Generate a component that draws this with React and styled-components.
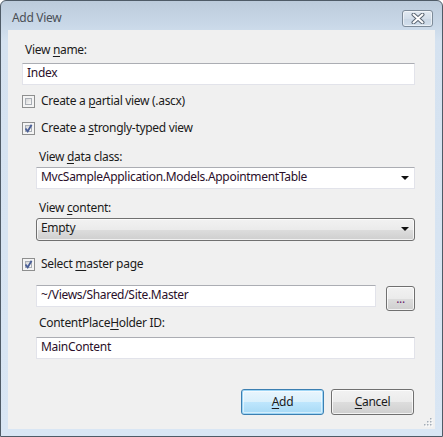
import React from "react";
import styled, { createGlobalStyle } from "styled-components";

const GlobalStyle = createGlobalStyle`
  body {
    margin: 0;
    background: #ffffff;
  }
  * {
    box-sizing: border-box;
  }
`;

const Window = styled.div`
  width: 443px;
  height: 437px;
  border: 1px solid #4f5b67;
  border-radius: 6px 6px 0 0;
  background: linear-gradient(#bccbdb 0px, #c9d8e8 24px, #d5e2f0 40px, #d9e6f4 100%);
  display: flex;
  flex-direction: column;
  padding: 0 7px 7px 7px;
  font-family: "Noto Sans", "Open Sans", sans-serif;
  font-size: 12px;
  letter-spacing: -0.3px;
  color: #1b1b1b;
  overflow: hidden;
`;

const TitleBar = styled.div`
  height: 29px;
  display: flex;
  align-items: flex-start;
  justify-content: space-between;
  padding: 0 2px 0 4px;
`;

const Title = styled.span`
  margin-top: 9px;
  color: #4a4f56;
  font-size: 12px;
  line-height: 16px;
`;

const CloseButton = styled.div`
  margin-top: 9px;
  width: 31px;
  height: 17px;
  border: 1px solid #7d8b99;
  border-radius: 3px;
  background: linear-gradient(#e2eaf2, #d3deea 50%, #c9d6e4 51%, #d2dfec);
  box-shadow: inset 0 0 0 1px rgba(255, 255, 255, 0.55);
  display: flex;
  align-items: center;
  justify-content: center;
`;

const Client = styled.div`
  flex: 1;
  background: #f0f0f0;
  padding: 12px 20px 0 14px;
  display: flex;
  flex-direction: column;
  position: relative;
`;

const Label = styled.div`
  line-height: 16px;
  padding-left: ${(p) => p.$pl || 3}px;
  margin-top: ${(p) => p.$mt || 0}px;
  white-space: nowrap;
`;

const Key = styled.span`
  text-decoration: underline;
  text-underline-offset: 2px;
`;

const TextBox = styled.div`
  height: 22px;
  margin-top: ${(p) => p.$mt || 0}px;
  margin-left: ${(p) => p.$ml || 0}px;
  width: ${(p) => (p.$w ? `${p.$w}px` : "auto")};
  flex: ${(p) => (p.$w ? "none" : "initial")};
  background: #ffffff;
  border: 1px solid #e2e3ea;
  border-top-color: #abadb3;
  padding: 1px 5px 0 4px;
  line-height: 16px;
  color: #2a0f2a;
  white-space: nowrap;
  display: flex;
  justify-content: space-between;
  align-items: flex-start;
`;

const DropButton = styled.div`
  height: 23px;
  margin-top: ${(p) => p.$mt || 0}px;
  margin-left: ${(p) => p.$ml || 0}px;
  border: 1px solid #707070;
  border-radius: 3px;
  background: linear-gradient(#f2f2f2, #ebebeb 50%, #dddddd 51%, #cfcfcf);
  box-shadow: inset 0 0 0 1px rgba(255, 255, 255, 0.7);
  padding: 1px 5px 0 4px;
  line-height: 16px;
  color: #1b1b1b;
  display: flex;
  justify-content: space-between;
  align-items: flex-start;
`;

const Arrow = styled.span`
  width: 0;
  height: 0;
  margin-top: 7px;
  border-left: 4px solid transparent;
  border-right: 4px solid transparent;
  border-top: 4px solid #111111;
`;

const CheckRow = styled.div`
  display: flex;
  align-items: center;
  gap: 6px;
  height: 16px;
  margin-top: ${(p) => p.$mt || 0}px;
  line-height: 16px;
`;

const Box = styled.span`
  width: 13px;
  height: 13px;
  border: 1px solid #8e8f8f;
  background: #f4f4f4;
  padding: 2px;
  display: flex;
  position: relative;
  &::before {
    content: "";
    flex: 1;
    border: 1px solid #a9aeb5;
    background: linear-gradient(135deg, #d6d6d6, #fbfbfb);
  }
  svg {
    position: absolute;
    left: 0px;
    top: 0px;
  }
`;

const Row = styled.div`
  display: flex;
  align-items: flex-start;
  margin-top: ${(p) => p.$mt || 0}px;
  margin-left: ${(p) => p.$ml || 0}px;
  gap: 10px;
`;

const Button = styled.div`
  width: ${(p) => p.$w || 83}px;
  height: ${(p) => p.$h || 26}px;
  margin-top: ${(p) => p.$mt || 0}px;
  border-radius: 3px;
  border: 1px solid ${(p) => (p.$default ? "#3c7fb1" : "#707070")};
  background: ${(p) =>
    p.$default
      ? "linear-gradient(#eaf6fd, #d9f0fc 50%, #bee6fd 51%, #a7d9f5)"
      : "linear-gradient(#f2f2f2, #ebebeb 50%, #dddddd 51%, #cfcfcf)"};
  box-shadow: ${(p) =>
    p.$default
      ? "inset 0 0 0 1px #9ed6f6, inset 0 0 0 2px rgba(255,255,255,0.5)"
      : "inset 0 0 0 1px rgba(255,255,255,0.75)"};
  display: flex;
  align-items: center;
  justify-content: center;
  line-height: 16px;
  color: ${(p) => p.$color || "#1b1b1b"};
`;

const Footer = styled.div`
  display: flex;
  justify-content: flex-end;
  gap: 7px;
  margin-top: 30px;
  margin-right: 1px;
`;

const Grip = styled.svg`
  position: absolute;
  right: 2px;
  bottom: 2px;
`;

const Check = ({ checked, children, mt }) => (
  <CheckRow $mt={mt}>
    <Box>
      {checked && (
        <svg width="11" height="11" viewBox="0 0 11 11">
          <path d="M2.5 5.5 L4.7 8.3 L8.6 1.8" fill="none" stroke="#4a5f97" strokeWidth="1.8" />
        </svg>
      )}
    </Box>
    <span>{children}</span>
  </CheckRow>
);

export default function App() {
  return (
    <>
      <GlobalStyle />
      <Window>
        <TitleBar>
          <Title>Add View</Title>
          <CloseButton>
            <svg width="14" height="11" viewBox="0 0 14 11">
              <path d="M2.5 1.5 L11.5 9.5 M11.5 1.5 L2.5 9.5" stroke="#5b6673" strokeWidth="4" strokeLinecap="round" />
              <path d="M2.5 1.5 L11.5 9.5 M11.5 1.5 L2.5 9.5" stroke="#ffffff" strokeWidth="2" strokeLinecap="round" />
            </svg>
          </CloseButton>
        </TitleBar>
        <Client>
          <Label>
            View <Key>n</Key>ame:
          </Label>
          <TextBox $mt={5}>Index</TextBox>

          <Check mt={8}>
            Create a <Key>p</Key>artial view (.ascx)
          </Check>
          <Check checked mt={11}>
            Create a <Key>s</Key>trongly-typed view
          </Check>

          <Label $pl={17} $mt={13}>
            View <Key>d</Key>ata class:
          </Label>
          <TextBox $mt={2} $ml={14}>
            <span>MvcSampleApplication.Models.AppointmentTable</span>
            <Arrow />
          </TextBox>

          <Label $pl={17} $mt={11}>
            View <Key>c</Key>ontent:
          </Label>
          <DropButton $mt={2} $ml={14}>
            <span>Empty</span>
            <Arrow />
          </DropButton>

          <Check checked mt={15}>
            Select <Key>m</Key>aster page
          </Check>

          <Row $mt={13} $ml={14}>
            <TextBox $w={340}>~/Views/Shared/Site.Master</TextBox>
            <Button $w={29} $h={25} $mt={1} $color="#6b1e6b">
              ...
            </Button>
          </Row>

          <Label $pl={17} $mt={4}>
            ContentPlace<Key>H</Key>older ID:
          </Label>
          <TextBox $mt={6} $ml={14}>
            MainContent
          </TextBox>

          <Footer>
            <Button $default>
              <span>
                <Key>A</Key>dd
              </span>
            </Button>
            <Button>
              <span>
                <Key>C</Key>ancel
              </span>
            </Button>
          </Footer>

          <Grip width="10" height="10" viewBox="0 0 10 10">
            {[
              [8, 2],
              [5, 5],
              [8, 5],
              [2, 8],
              [5, 8],
              [8, 8],
            ].map(([x, y]) => (
              <g key={`${x}-${y}`}>
                <rect x={x} y={y} width="1.5" height="1.5" fill="#ffffff" />
                <rect x={x - 1} y={y - 1} width="1.5" height="1.5" fill="#a4adb7" />
              </g>
            ))}
          </Grip>
        </Client>
      </Window>
    </>
  );
}
